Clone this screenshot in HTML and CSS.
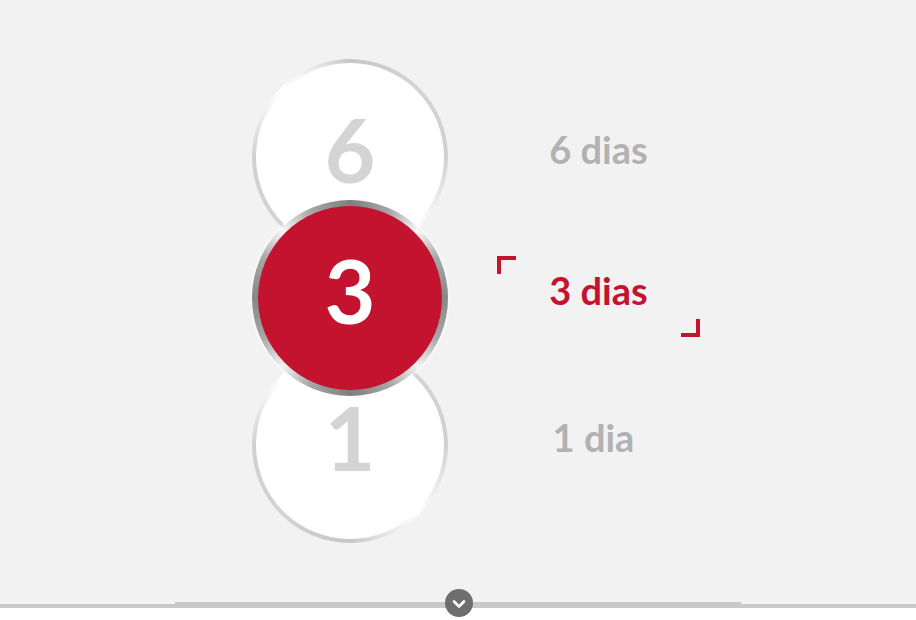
FILE: index.html
```html
<!DOCTYPE html>
<html lang="pt">
<head>
<meta charset="utf-8">
<title>Duração</title>
<link rel="stylesheet" href="styles.css">
</head>
<body>
<main class="stage">
  <ul class="picker">
    <li class="option">
      <div class="disc"><span class="disc-face">6</span></div>
      <div class="label">6 dias</div>
    </li>
    <li class="option option--active">
      <div class="disc"><span class="disc-face">3</span></div>
      <div class="label">3 dias</div>
    </li>
    <li class="option option--last">
      <div class="disc"><span class="disc-face">1</span></div>
      <div class="label label--single">1 dia</div>
    </li>
  </ul>
</main>
<footer class="dock">
  <div class="dock-ledge"></div>
  <div class="dock-rail"></div>
  <button class="dock-toggle" type="button" aria-label="Mais">
    <svg width="14" height="10" viewBox="0 0 14 10" aria-hidden="true">
      <path d="M2 2.5 L7 7.5 L12 2.5" fill="none" stroke="#fff" stroke-width="2.6" stroke-linecap="round" stroke-linejoin="round"/>
    </svg>
  </button>
</footer>
</body>
</html>
```
FILE: styles.css
```css
html, body {
  margin: 0;
  padding: 0;
}

body {
  width: 916px;
  height: 620px;
  overflow: hidden;
  background: #ffffff;
  font-family: Lato, "Open Sans", "Liberation Sans", sans-serif;
}

.stage {
  height: 604px;
  background: #f2f2f2;
}

.picker {
  list-style: none;
  margin: 0;
  padding: 59px 0 0 252px;
}

.option {
  display: flex;
  align-items: center;
  gap: 49px;
}

.option + .option {
  margin-top: -55px;
}

.option--last {
  margin-top: -49px !important;
}

.option--active {
  position: relative;
  z-index: 2;
}

/* ring drawn by the padding area, face by the inner span */
.disc {
  width: 196px;
  height: 196px;
  box-sizing: border-box;
  padding: 4px;
  border-radius: 50%;
  background: conic-gradient(
    #c6c6c6 0deg, #d4d4d4 40deg, #d0d0d0 90deg, #e6e6e6 112deg,
    #ffffff 135deg, #e6e6e6 158deg, #c6c6c6 180deg, #d4d4d4 225deg,
    #d0d0d0 270deg, #eaeaea 292deg, #ffffff 315deg, #eaeaea 338deg,
    #c6c6c6 360deg);
}

.disc-face {
  display: flex;
  align-items: center;
  justify-content: center;
  width: 100%;
  height: 100%;
  border-radius: 50%;
  background: #ffffff;
  color: #d4d4d6;
  font-size: 88px;
  font-weight: 700;
  line-height: 1;
  padding-bottom: 16px;
  box-sizing: border-box;
}

.option--active .disc {
  padding: 6px;
  background: conic-gradient(
    #7e7e7e 0deg, #a8a8a8 25deg, #f8f8f8 45deg, #a8a8a8 65deg,
    #878787 90deg, #a8a8a8 115deg, #f2f2f2 135deg, #a8a8a8 155deg,
    #7e7e7e 180deg, #a8a8a8 205deg, #f2f2f2 225deg, #a8a8a8 245deg,
    #878787 270deg, #a8a8a8 295deg, #f8f8f8 315deg, #a8a8a8 335deg,
    #7e7e7e 360deg);
  box-shadow: 0 0 3px 1px rgba(255, 255, 255, 0.9);
}

.option--active .disc-face {
  background: #c4132f;
  color: #ffffff;
}

.label {
  position: relative;
  display: flex;
  align-items: center;
  justify-content: center;
  width: 203px;
  height: 81px;
  margin-bottom: 3px;
  color: #b2b2b2;
  font-size: 38px;
  font-weight: 700;
  padding-bottom: 14px;
  box-sizing: border-box;
}

.label--single {
  padding-right: 10px;
}

.option--active .label {
  color: #c4132f;
}

/* selection brackets around the active label */
.option--active .label::before,
.option--active .label::after {
  content: "";
  position: absolute;
  width: 15px;
  height: 14px;
  border: 0 solid #c4132f;
}

.option--active .label::before {
  left: 0;
  top: 0;
  border-left-width: 4px;
  border-top-width: 4px;
}

.option--active .label::after {
  right: 0;
  bottom: 0;
  border-right-width: 4px;
  border-bottom-width: 4px;
}

.dock {
  position: relative;
  height: 16px;
}

.dock-ledge {
  width: 566px;
  height: 2px;
  margin: -2px auto 0;
  background: #c9c9c9;
}

.dock-rail {
  height: 4px;
  background: #c9c9c9;
}

.dock-toggle {
  position: absolute;
  left: 445px;
  top: -13px;
  width: 28px;
  height: 28px;
  padding: 0;
  border: 0;
  border-radius: 50%;
  background: #6e6e6e;
  display: flex;
  align-items: center;
  justify-content: center;
  cursor: pointer;
}

.dock-toggle svg {
  display: block;
  margin-top: 2px;
}
```
